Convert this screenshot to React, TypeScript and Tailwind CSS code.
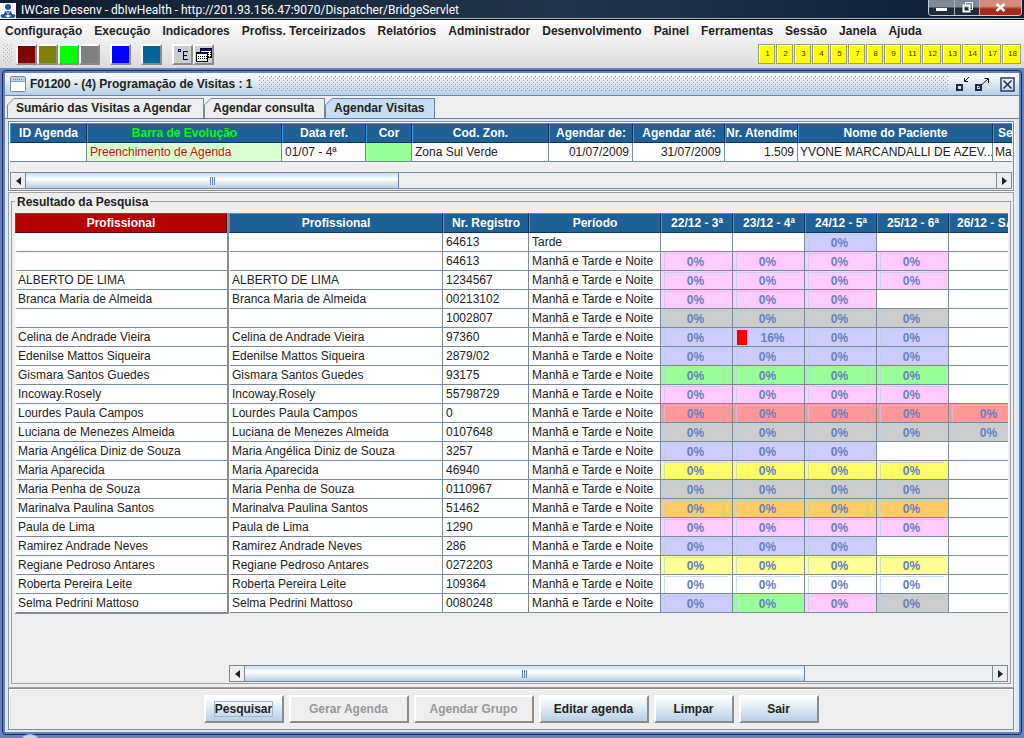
import type { ReactNode } from "react";

const menus = [
  "Configuração", "Execução", "Indicadores", "Profiss. Terceirizados", "Relatórios", "Administrador",
  "Desenvolvimento", "Painel", "Ferramentas", "Sessão", "Janela", "Ajuda",
];

const shortcuts = [1, 2, 3, 4, 5, 7, 8, 9, 11, 12, 13, 14, 17, 18];

const fills: Record<string, string> = {
  L: "bg-[#ccccff]",
  P: "bg-[#ffccff]",
  G: "bg-[#cccccc]",
  V: "bg-[#99ff99]",
  R: "bg-[#ff9999]",
  Y: "bg-[#ffff66]",
  A: "bg-[#ffff99]",
  O: "bg-[#ffcc66]",
  W: "bg-white",
};

// name, register number, period, one colour letter per day ("-" = no agenda)
const rows: [string, string, string, string][] = [
  ["", "64613", "Tarde", "--L--"],
  ["", "64613", "Manhã e Tarde e Noite", "PPPP-"],
  ["ALBERTO DE LIMA", "1234567", "Manhã e Tarde e Noite", "PPPP-"],
  ["Branca Maria de Almeida", "00213102", "Manhã e Tarde e Noite", "PPP--"],
  ["", "1002807", "Manhã e Tarde e Noite", "GGGG-"],
  ["Celina de Andrade Vieira", "97360", "Manhã e Tarde e Noite", "LLLL-"],
  ["Edenilse Mattos Siqueira", "2879/02", "Manhã e Tarde e Noite", "LLLL-"],
  ["Gismara Santos Guedes", "93175", "Manhã e Tarde e Noite", "VVVV-"],
  ["Incoway.Rosely", "55798729", "Manhã e Tarde e Noite", "PPPP-"],
  ["Lourdes Paula Campos", "0", "Manhã e Tarde e Noite", "RRRRR"],
  ["Luciana de Menezes Almeida", "0107648", "Manhã e Tarde e Noite", "GGGGG"],
  ["Maria Angélica Diniz de Souza", "3257", "Manhã e Tarde e Noite", "LLL--"],
  ["Maria Aparecida", "46940", "Manhã e Tarde e Noite", "YYYY-"],
  ["Maria Penha de Souza", "0110967", "Manhã e Tarde e Noite", "GGGG-"],
  ["Marinalva Paulina Santos", "51462", "Manhã e Tarde e Noite", "OOOO-"],
  ["Paula de Lima", "1290", "Manhã e Tarde e Noite", "PPPP-"],
  ["Ramirez Andrade Neves", "286", "Manhã e Tarde e Noite", "LLL--"],
  ["Regiane Pedroso Antares", "0272203", "Manhã e Tarde e Noite", "AAAA-"],
  ["Roberta Pereira Leite", "109364", "Manhã e Tarde e Noite", "WWWW-"],
  ["Selma Pedrini Mattoso", "0080248", "Manhã e Tarde e Noite", "LVPG-"],
];

function Bumps({ id, color }: { id: string; color: string }) {
  return (
    <svg className="w-full h-full" aria-hidden="true">
      <defs>
        <pattern id={id} width="4" height="4" patternUnits="userSpaceOnUse">
          <rect width="1" height="1" fill={color} />
          <rect x="2" y="2" width="1" height="1" fill={color} />
        </pattern>
      </defs>
      <rect width="100%" height="100%" fill={`url(#${id})`} />
    </svg>
  );
}

function Th({ children, className = "" }: { children: ReactNode; className?: string }) {
  return (
    <th className={`h-5 p-0 border border-t-[#3399e6] border-l-[#3399e6] border-r-[#0d3558] border-b-[#0d3558] bg-[#1f6096] font-bold text-white whitespace-nowrap overflow-hidden ${className}`}>
      {children}
    </th>
  );
}

function Td({ children, className = "px-[3px]" }: { children?: ReactNode; className?: string }) {
  return (
    <td className={`h-[19px] py-0 border-r border-b border-[#7a8a99] whitespace-nowrap overflow-hidden ${className}`}>
      {children}
    </td>
  );
}

function DayCell({ fill, value }: { fill: string; value: number }) {
  if (fill === "-") return <Td className="bg-white" />;
  return (
    <td className={`h-[19px] p-0 border-r border-b border-[#7a8a99] ${fills[fill]}`}>
      <div className="flex h-[17px] items-center ml-[3px] mr-1 border-l border-t border-[#b8cfe5]/70 text-[#6382bf] font-bold">
        {value > 0 && <span className="h-[15px] w-[10px] bg-[#ff0000]" />}
        <span className="flex-1 pr-0.5 text-center">{value}%</span>
      </div>
    </td>
  );
}

function ScrollBar({ label, thumb }: { label: string; thumb: string }) {
  return (
    <div className="flex h-[17px] shrink-0 border border-[#7a8a99] bg-[#eeeeee]" role="group" aria-label={label}>
      <button aria-label="Anterior" className="flex w-[15px] items-center justify-center border-r border-[#7a8a99]">
        <svg width="5" height="8" viewBox="0 0 5 8"><path d="M5 0v8L0 4z" fill="#222" /></svg>
      </button>
      <div className="flex flex-1">
        <div className={`flex items-center justify-center gap-px border-r border-[#6382bf] bg-linear-to-b from-[#c8ddf2] via-white via-40% to-[#b8cfe5] ${thumb}`}>
          <span className="h-2 w-px bg-[#6382bf]" />
          <span className="h-2 w-px bg-[#6382bf]" />
          <span className="h-2 w-px bg-[#6382bf]" />
        </div>
      </div>
      <button aria-label="Próximo" className="flex w-[15px] items-center justify-center border-l border-[#7a8a99]">
        <svg width="5" height="8" viewBox="0 0 5 8"><path d="M0 0v8l5-4z" fill="#222" /></svg>
      </button>
    </div>
  );
}

function ToolButton({ label, color, children }: { label: string; color: string; children?: ReactNode }) {
  return (
    <button aria-label={label} className={`flex w-[21px] h-[21px] items-center justify-center border-2 border-t-white border-l-white border-r-[#8c8c8c] border-b-[#8c8c8c] ${color}`}>
      {children}
    </button>
  );
}

function Tab({ children, active = false, className }: { children: ReactNode; active?: boolean; className: string }) {
  const fill = active ? "#c8ddf2" : "#eeeeee";
  const line = active ? "#6382bf" : "#7a8a99";
  return (
    <button role="tab" aria-selected={active} className={`flex h-5 ${className}`}>
      <svg width="8" height="20" viewBox="0 0 8 20" className="shrink-0">
        <path d="M0.5 20V7L7 0.5H8V20z" fill={fill} />
        <path d="M0.5 20V7L7 0.5H8" fill="none" stroke={line} />
      </svg>
      <span className={`flex-1 h-5 border-t border-r text-left pl-px leading-[18px] whitespace-nowrap ${active ? "bg-[#c8ddf2] border-[#6382bf]" : "bg-[#eeeeee] border-[#7a8a99]"}`}>
        {children}
      </span>
    </button>
  );
}

function ActionButton({ children, className, disabled = false, focused = false }: { children: ReactNode; className: string; disabled?: boolean; focused?: boolean }) {
  return (
    <button
      disabled={disabled}
      className={`h-7 border-2 border-t-white border-l-white border-r-[#8c8c8c] border-b-[#8c8c8c] font-bold ${disabled ? "bg-[#eeeeee] text-[#999999]" : "bg-linear-to-b from-white to-[#b8cfe5]"} ${className}`}
    >
      <span className={focused ? "border border-[#a3b8cc]" : ""}>{children}</span>
    </button>
  );
}

function TitleBar() {
  return (
    <header className="flex h-5 items-start justify-between border-b border-[#05080d] bg-linear-to-r from-[#101c2e] via-[#24364b] via-55% to-[#0b1d33] shadow-[inset_0_-1px_0_#a9b4c0]">
      <div className="flex items-center">
        <svg width="16" height="16" viewBox="0 0 16 16" className="mt-px" aria-hidden="true">
          <rect width="16" height="16" fill="#fff" />
          <circle cx="8" cy="4" r="3" fill="#1d4f9c" />
          <path d="M3 15c-4-1-3-4 1-4l1-3h6l1 3c4 0 5 3 1 4z" fill="#1d4f9c" />
          <path d="M6 8l2 3 2-3M5 13h6" stroke="#cfe3fa" fill="none" />
          <circle cx="8" cy="13" r="1.5" fill="#fff" />
        </svg>
        <h1 className="ml-[5px] font-[Roboto,sans-serif] text-xs leading-5 text-white whitespace-nowrap">
          IWCare Desenv - dbIwHealth - http://201.93.156.47:9070/Dispatcher/BridgeServlet
        </h1>
      </div>
      <div className="mr-0.5 flex h-4 overflow-hidden rounded-b border border-t-0 border-[#c3ccd6]">
        <button aria-label="Minimizar" className="flex w-[26px] items-end justify-center border-r border-[#aab4be] bg-linear-to-b from-[#7f8a96] from-45% to-[#1f2c3a] to-55% pb-1">
          <span className="h-[3px] w-[11px] bg-white" />
        </button>
        <button aria-label="Restaurar" className="flex w-[25px] items-center justify-center border-r border-[#aab4be] bg-linear-to-b from-[#7f8a96] from-45% to-[#1f2c3a] to-55%">
          <svg width="11" height="11" viewBox="0 0 11 11" fill="none" stroke="#fff"><path d="M3.5 2.5v-2h7v7h-2" /><path d="M1.5 3.5h6v6h-6z" strokeWidth="2" /></svg>
        </button>
        <button aria-label="Fechar" className="flex w-[41px] items-center justify-center bg-linear-to-b from-[#d58c80] from-40% to-[#a82a16] to-60%">
          <svg width="11" height="9" viewBox="0 0 11 9"><path d="M1.500 1l8 7M9.500 1l-8 7" stroke="#fff" strokeWidth="2.500" /></svg>
        </button>
      </div>
    </header>
  );
}

function Toolbar() {
  return (
    <div className="flex h-[26px] items-start justify-between pt-0.5 pl-[3px] pr-[3px]">
      <div className="flex">
        <div className="h-5 w-[10px] mr-[3px]"><Bumps id="grip" color="#b0b0b0" /></div>
        <ToolButton label="Vermelho" color="bg-[#800000]" />
        <ToolButton label="Oliva" color="bg-[#808000]" />
        <ToolButton label="Verde" color="bg-[#00ff00]" />
        <ToolButton label="Cinza" color="bg-[#808080]" />
        <div className="w-[10px]" />
        <ToolButton label="Azul" color="bg-[#0000ff]" />
        <div className="w-[10px]" />
        <ToolButton label="Petróleo" color="bg-[#006699]" />
        <div className="w-[10px]" />
        <ToolButton label="Árvore" color="bg-[#cccccc]">
          <svg width="12" height="13" viewBox="0 0 12 13" fill="none" stroke="#000080" shapeRendering="crispEdges">
            <path d="M1 1.500h3M1 3.500h3M1.500 1v3M3.500 1v3M6.500 3v9M6 3.500h5M6 7.500h4M6 11.500h5" />
          </svg>
        </ToolButton>
        <ToolButton label="Janelas" color="bg-[#cccccc]">
          <svg width="16" height="14" viewBox="0 0 16 14" shapeRendering="crispEdges">
            <path d="M4.500 0.500h11v9h-11z" fill="#fff" stroke="#000" />
            <path d="M4 1h12v2H4z" fill="#000080" />
            <path d="M12 4.500h3M12 6.500h3M12 8.500h3" stroke="#000" strokeDasharray="1 1" />
            <path d="M0.500 4.500h11v9H0.500z" fill="#fff" stroke="#000" />
            <path d="M1 5h10v1H1z" fill="#000080" />
            <path d="M2 8.500h9M2 10.500h9" stroke="#000" strokeDasharray="1 1" />
          </svg>
        </ToolButton>
      </div>
      <div className="flex gap-px">
        {shortcuts.map((n) => (
          <button
            key={n}
            className={`h-5 border border-[#999999] bg-[#ffff00] pl-0.5 text-[8px] text-[#333333] shadow-[inset_1px_1px_0_#fff] ${n > 9 ? "w-[19px]" : "w-[17px]"}`}
          >
            {n}
          </button>
        ))}
      </div>
    </div>
  );
}

function FrameTitle() {
  return (
    <div className="flex h-[23px] shrink-0 items-center border-b border-[#6382bf] bg-linear-to-b from-white to-[#b8cfe5] pl-[5px] pr-1">
      <svg width="16" height="16" viewBox="0 0 16 16" className="shrink-0" aria-hidden="true">
        <rect x="0.500" y="0.500" width="15" height="15" rx="1" fill="#fff" stroke="#7a8a99" />
        <path d="M1 1h14v4H1z" fill="#b8cfe5" />
        <path d="M1 5.500h14" stroke="#8ba3bd" />
        <path d="M3 3.500h10" stroke="#6382bf" strokeDasharray="1 1" />
      </svg>
      <h2 className="ml-1 font-bold whitespace-nowrap">F01200 - (4) Programação de Visitas : 1</h2>
      <div className="ml-1.5 h-4 min-w-0 flex-1"><Bumps id="title" color="#7f9cc9" /></div>
      <button aria-label="Minimizar janela" className="ml-2">
        <svg width="15" height="15" viewBox="0 0 15 15" fill="none">
          <path d="M1 8h5v5H1z" stroke="#222b4a" strokeWidth="2" />
          <path d="M13 0L9 4M8.500 1v3.500H12" stroke="#111" />
        </svg>
      </button>
      <button aria-label="Maximizar janela" className="ml-1">
        <svg width="15" height="15" viewBox="0 0 15 15" fill="none">
          <path d="M1 8h5v5H1z" stroke="#222b4a" strokeWidth="2" />
          <path d="M3 11L13 2M9.500 1.500h4V6" stroke="#111" />
        </svg>
      </button>
      <button aria-label="Fechar janela" className="ml-2.5">
        <svg width="15" height="15" viewBox="0 0 15 15" fill="none">
          <path d="M1 1h13v13H1z" stroke="#2b3a66" strokeWidth="1.500" />
          <path d="M3.500 3.500l8 8M11.500 3.500l-8 8" stroke="#222b4a" strokeWidth="1.500" />
        </svg>
      </button>
    </div>
  );
}

function AgendaTable() {
  return (
    <div className="shrink-0 border border-[#8c8c8c] p-px shadow-[inset_1px_1px_0_#fff,1px_1px_0_#fff]">
      <div className="overflow-hidden">
        <table className="w-[1028px] table-fixed border-separate border-spacing-0">
          <thead>
            <tr>
              <Th className="w-[77px]">ID Agenda</Th>
              <Th className="w-[195px] text-[#00ff00]!">Barra de Evolução</Th>
              <Th className="w-[84px]">Data ref.</Th>
              <Th className="w-[46px]">Cor</Th>
              <Th className="w-[137px]">Cod. Zon.</Th>
              <Th className="w-[84px]">Agendar de:</Th>
              <Th className="w-[92px]">Agendar até:</Th>
              <Th className="w-[73px] text-left">Nr. Atendime</Th>
              <Th className="w-[195px]">Nome do Paciente</Th>
              <Th className="w-[45px] pl-1! text-left">Se</Th>
            </tr>
          </thead>
          <tbody className="bg-white">
            <tr>
              <Td />
              <Td className="px-[3px] bg-[#d9ffd2] text-[#cc1111]">Preenchimento de Agenda</Td>
              <Td>01/07 - 4ª</Td>
              <Td className="bg-[#99ff99]" />
              <Td>Zona Sul Verde</Td>
              <Td className="px-[3px] text-right">01/07/2009</Td>
              <Td className="px-[3px] text-right">31/07/2009</Td>
              <Td className="px-[3px] text-right">1.509</Td>
              <Td className="pl-0.5 pr-0">YVONE MARCANDALLI DE AZEV...</Td>
              <Td className="pl-0.5 pr-0">Ma</Td>
            </tr>
          </tbody>
        </table>
      </div>
      <div className="mt-2.5">
        <ScrollBar label="Rolagem da agenda" thumb="w-5/13" />
      </div>
    </div>
  );
}

function ResultTables() {
  return (
    <div className="flex min-w-0 flex-1">
      <div className="w-[214px] shrink-0">
        <table className="w-full table-fixed border-separate border-spacing-0 border-r-2 border-b border-[#8c8c8c]">
          <thead>
            <tr>
              <Th className="bg-[#b40000]! border-t-[#f01010]! border-l-[#f01010]! border-b-[#600000]! border-r-[#600000]!">Profissional</Th>
            </tr>
          </thead>
          <tbody className="bg-white">
            {rows.map(([name, reg], i) => (
              <tr key={reg + i}><Td className="border-r-0 border-l-2 border-l-white pl-px">{name}</Td></tr>
            ))}
          </tbody>
        </table>
      </div>
      <div className="flex min-w-0 flex-1 flex-col justify-between overflow-hidden">
        <table className="w-[802px] table-fixed border-separate border-spacing-0">
          <thead>
            <tr>
              <Th className="w-[214px]">Profissional</Th>
              <Th className="w-[86px]">Nr. Registro</Th>
              <Th className="w-[132px]">Período</Th>
              <Th className="w-[72px]">22/12 - 3ª</Th>
              <Th className="w-[72px]">23/12 - 4ª</Th>
              <Th className="w-[72px]">24/12 - 5ª</Th>
              <Th className="w-[72px]">25/12 - 6ª</Th>
              <Th className="w-[82px]">26/12 - SÁB</Th>
            </tr>
          </thead>
          <tbody className="bg-white">
            {rows.map(([name, reg, period, days], i) => (
              <tr key={reg + i}>
                <Td className="border-l-2 border-l-white pl-px">{name}</Td>
                <Td>{reg}</Td>
                <Td>{period}</Td>
                {days.split("").map((d, j) => (
                  <DayCell key={j} fill={d} value={reg === "97360" && j === 1 ? 16 : 0} />
                ))}
              </tr>
            ))}
          </tbody>
        </table>
        <ScrollBar label="Rolagem do resultado" thumb="w-3/4" />
      </div>
    </div>
  );
}

export default function App() {
  return (
    <div className="relative flex min-h-screen flex-col overflow-hidden bg-[#eeeeee] font-['Liberation_Sans',Arial,sans-serif] text-xs leading-4 text-[#222222]">
      <TitleBar />
      <div className="bg-linear-to-b from-white to-[#dadada]">
        <nav className="flex h-[22px] items-center gap-3 pl-[5px] font-bold">
          {menus.map((m) => (
            <button key={m} className="whitespace-nowrap">{m}</button>
          ))}
        </nav>
        <Toolbar />
      </div>
      <div className="flex flex-1 flex-col bg-[#6382bf] px-0.5 pt-0.5 pb-[3px]">
        <div className="flex flex-1 flex-col rounded-sm border border-[#1c2a5a] p-0.5">
          <main className="flex flex-1 flex-col bg-[#eeeeee]">
            <FrameTitle />
            <div role="tablist" className="mt-0.5 flex shrink-0 border-b border-[#6382bf] pl-0.5 font-bold">
              <Tab className="w-[197px]">Sumário das Visitas a Agendar</Tab>
              <Tab className="w-[121px]">Agendar consulta</Tab>
              <Tab className="w-[110px]" active>Agendar Visitas</Tab>
            </div>
            <div className="flex flex-1 flex-col border-x-[3px] border-y-2 border-[#dbe8f6] pr-0.5">
              <AgendaTable />
              <div className="mt-px flex flex-1 flex-col border border-[#a0a0a0] px-0.5 pt-2 pb-[3px]">
                <section aria-labelledby="resultado" className="flex flex-1 flex-col border border-[#a0a0a0] pl-[3px] pr-0.5 pb-px">
                  <h3 id="resultado" className="-mt-2 mb-[3px] h-4 self-start bg-[#eeeeee] px-0.5 font-bold">Resultado da Pesquisa</h3>
                  <ResultTables />
                </section>
              </div>
              <footer className="flex shrink-0 justify-center gap-[5px] border border-[#8c8c8c] py-1.5 shadow-[inset_1px_1px_0_#fff]">
                <ActionButton className="w-20" focused>Pesquisar</ActionButton>
                <ActionButton className="w-[120px]" disabled>Gerar Agenda</ActionButton>
                <ActionButton className="w-[120px]" disabled>Agendar Grupo</ActionButton>
                <ActionButton className="w-[110px]">Editar agenda</ActionButton>
                <ActionButton className="w-20">Limpar</ActionButton>
                <ActionButton className="w-20">Sair</ActionButton>
              </footer>
            </div>
          </main>
        </div>
      </div>
      <div className="absolute -bottom-5 left-[18px] size-6 rounded-full border border-[#9db4dc] bg-[#c8d8ee]" />
    </div>
  );
}
